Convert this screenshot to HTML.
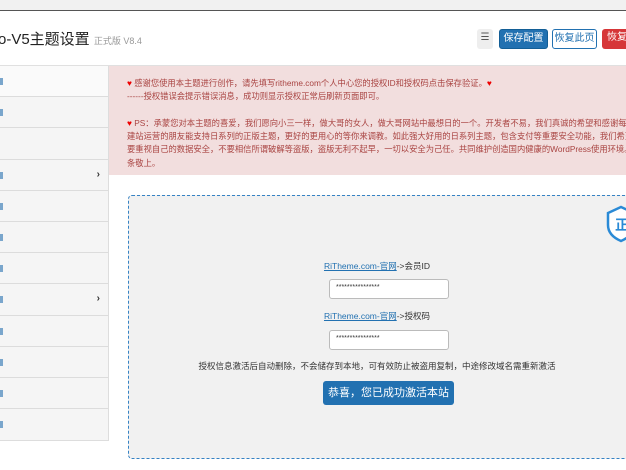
<!DOCTYPE html>
<html><head><meta charset="utf-8"><style>
*{box-sizing:border-box;margin:0;padding:0}
body{width:626px;height:470px;overflow:hidden;background:#fff;font-family:"Liberation Sans","Noto Sans CJK SC",sans-serif;position:relative}
.top{position:absolute;left:0;top:0;width:626px;height:11px;background:#f1f1f1;border-bottom:1px solid #555}
.hdr{position:absolute;left:0;top:12px;width:626px;height:54px;background:#fff;border-bottom:1px solid #e0e0e0}
.title{position:absolute;left:-2px;top:28px;font-size:15px;color:#222;white-space:nowrap}
.title small{font-size:9px;color:#999}
.btn{position:absolute;top:29px;height:20px;font-size:10px;line-height:18px;text-align:center;border-radius:3px}
.side{position:absolute;left:0;top:66px;width:109px;height:375px;background:#f5f5f5;border-right:1px solid #ddd;border-bottom:1px solid #ddd}
.row{height:31.2px;border-bottom:1px solid #dcdcdc;position:relative;font-size:10px;color:#2271b1;line-height:30px}
.row i{position:absolute;left:0;top:12px;width:3px;height:7px;background:#7aa6cc}
.row b{position:absolute;right:8px;top:0;color:#333;font-size:10px}
.alert{position:absolute;left:109px;top:66px;width:517px;height:109px;background:#f2dede;color:#a94442;font-size:8.3px;line-height:13.3px;padding:11px 0 0 18px;white-space:nowrap;overflow:hidden}
.h{color:#e00}
.box{position:absolute;left:128px;top:195px;width:510px;height:264px;background:#f1f1f1;border:1px dashed #3582c4;border-radius:4px}
.lbl{position:absolute;left:0;width:496px;text-align:center;font-size:8.5px;color:#333}
.lbl a{color:#2271b1;text-decoration:underline}
.inp{position:absolute;left:200px;width:120px;height:20px;background:#fff;border:1px solid #bbb;border-radius:3px;font-size:7px;line-height:16px;padding-left:6px;color:#333}
</style></head><body>
<div class="top"></div>
<div class="hdr"></div>
<div class="title">o-V5主题设置 <small>正式版 V8.4</small></div>
<div class="btn" style="left:477px;width:16px;background:#eee;color:#555">☰</div>
<div class="btn" style="left:499px;width:49px;background:#2271b1;color:#fff;border:1px solid #135e96">保存配置</div>
<div class="btn" style="left:552px;width:45px;background:#fff;color:#2271b1;border:1px solid #2271b1">恢复此页</div>
<div class="btn" style="left:602px;width:30px;background:#d63638;color:#fff">恢复</div>
<div class="side">
<div class="row" style="background:#fafafa"><i></i></div><div class="row"><i></i></div><div class="row"></div><div class="row"><i></i><b>›</b></div><div class="row"><i></i></div><div class="row"><i></i></div><div class="row"><i></i></div><div class="row"><i></i><b>›</b></div><div class="row"><i></i></div><div class="row"><i></i></div><div class="row"><i></i></div><div class="row" style="border-bottom:0"><i></i></div>
</div>
<div class="alert"><span class="h">♥</span> 感谢您使用本主题进行创作，请先填写ritheme.com个人中心您的授权ID和授权码点击保存验证。<span class="h">♥</span><br>------授权错误会提示错误消息，成功则显示授权正常后刷新页面即可。<br><br><span class="h">♥</span> PS：承蒙您对本主题的喜爱，我们愿向小三一样，做大哥的女人，做大哥网站中最想日的一个。开发者不易，我们真诚的希望和感谢每一个<br>建站运营的朋友能支持日系列的正版主题，更好的更用心的等你来调教。如此强大好用的日系列主题，包含支付等重要安全功能，我们希望用户<br>要重视自己的数据安全，不要相信所谓破解等盗版，盗版无利不起早，一切以安全为己任。共同维护创造国内健康的WordPress使用环境。开发<br>条敬上。</div>
<div class="box">
<svg style="position:absolute;left:477px;top:9px" width="30" height="38" viewBox="0 0 30 38"><path d="M15 2 L28 8 V20 C28 28 22 33 15 36 C8 33 2 28 2 20 V8 Z" fill="#fff" stroke="#2a8ad6" stroke-width="2.5"/><text x="9" y="25" font-size="14" font-weight="bold" fill="#2a8ad6" font-family="Noto Sans CJK SC">正</text></svg>
<div class="lbl" style="top:64px"><a>RiTheme.com-官网</a>-&gt;会员ID</div>
<div class="inp" style="top:83px">****************</div>
<div class="lbl" style="top:114px"><a>RiTheme.com-官网</a>-&gt;授权码</div>
<div class="inp" style="top:134px">****************</div>
<div class="lbl" style="top:164px">授权信息激活后自动删除，不会储存到本地，可有效防止被盗用复制，中途修改域名需重新激活</div>
<div style="position:absolute;left:194px;top:185px;width:131px;height:24px;background:#2271b1;border-radius:3px;color:#fff;font-size:11px;line-height:24px;text-align:center">恭喜，您已成功激活本站</div>
</div>
</body></html>
